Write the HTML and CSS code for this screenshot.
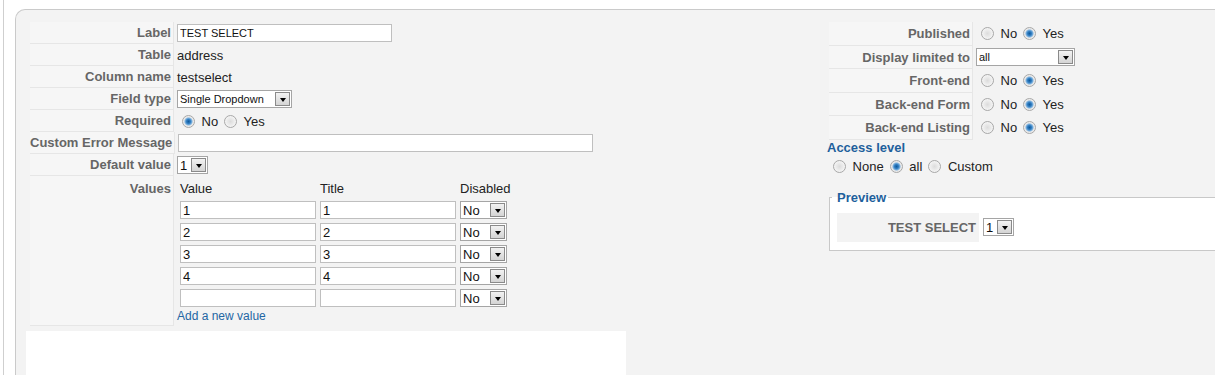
FILE: index.html
```html
<!DOCTYPE html>
<html lang="en">
<head>
  <meta charset="UTF-8">
  <title>Edit field</title>
  <link rel="stylesheet" href="styles.css">
</head>
<body>
  <div class="page">
    <div class="panel">
      <div class="col-main">
        <div class="fields">
          <div class="row">
            <div class="key">Label</div>
            <div class="val"><input type="text" class="txt txt-label" value="TEST SELECT"></div>
          </div>
          <div class="row">
            <div class="key">Table</div>
            <div class="val">address</div>
          </div>
          <div class="row">
            <div class="key">Column name</div>
            <div class="val">testselect</div>
          </div>
          <div class="row">
            <div class="key">Field type</div>
            <div class="val">
              <span class="dd dd-sm dd-type"><select><option>Single Dropdown</option></select><span class="dd-btn"></span></span>
            </div>
          </div>
          <div class="row">
            <div class="key">Required</div>
            <div class="val">
              <label class="opt"><input type="radio" name="required" checked> No</label>
              <label class="opt"><input type="radio" name="required"> Yes</label>
            </div>
          </div>
          <div class="row">
            <div class="key">Custom Error Message</div>
            <div class="val"><input type="text" class="txt txt-error" value=""></div>
          </div>
          <div class="row">
            <div class="key">Default value</div>
            <div class="val">
              <span class="dd dd-num"><select><option>1</option></select><span class="dd-btn"></span></span>
            </div>
          </div>
          <div class="row row-values">
            <div class="key">Values</div>
            <div class="val">
              <div class="values-grid">
                <div class="vh">Value</div>
                <div class="vh">Title</div>
                <div class="vh">Disabled</div>

                <input type="text" class="txt" value="1">
                <input type="text" class="txt" value="1">
                <span class="dd dd-dis"><select><option>No</option></select><span class="dd-btn"></span></span>

                <input type="text" class="txt" value="2">
                <input type="text" class="txt" value="2">
                <span class="dd dd-dis"><select><option>No</option></select><span class="dd-btn"></span></span>

                <input type="text" class="txt" value="3">
                <input type="text" class="txt" value="3">
                <span class="dd dd-dis"><select><option>No</option></select><span class="dd-btn"></span></span>

                <input type="text" class="txt" value="4">
                <input type="text" class="txt" value="4">
                <span class="dd dd-dis"><select><option>No</option></select><span class="dd-btn"></span></span>

                <input type="text" class="txt" value="">
                <input type="text" class="txt" value="">
                <span class="dd dd-dis"><select><option>No</option></select><span class="dd-btn"></span></span>
              </div>
              <a href="#" class="add-link">Add a new value</a>
            </div>
          </div>
        </div>
        <div class="blank"></div>
      </div>

      <div class="col-side">
        <div class="side-fields">
          <div class="row side-row">
            <div class="key">Published</div>
            <div class="val">
              <label class="opt"><input type="radio" name="published"> No</label>
              <label class="opt"><input type="radio" name="published" checked> Yes</label>
            </div>
          </div>
          <div class="row side-row">
            <div class="key">Display limited to</div>
            <div class="val">
              <span class="dd dd-sm dd-limit"><select><option>all</option></select><span class="dd-btn"></span></span>
            </div>
          </div>
          <div class="row side-row">
            <div class="key">Front-end</div>
            <div class="val">
              <label class="opt"><input type="radio" name="frontend"> No</label>
              <label class="opt"><input type="radio" name="frontend" checked> Yes</label>
            </div>
          </div>
          <div class="row side-row">
            <div class="key">Back-end Form</div>
            <div class="val">
              <label class="opt"><input type="radio" name="backform"> No</label>
              <label class="opt"><input type="radio" name="backform" checked> Yes</label>
            </div>
          </div>
          <div class="row side-row">
            <div class="key">Back-end Listing</div>
            <div class="val">
              <label class="opt"><input type="radio" name="backlist"> No</label>
              <label class="opt"><input type="radio" name="backlist" checked> Yes</label>
            </div>
          </div>
        </div>

        <div class="access-title">Access level</div>
        <div class="access-opts">
          <label class="opt"><input type="radio" name="access"> None</label>
          <label class="opt"><input type="radio" name="access" checked> all</label>
          <label class="opt"><input type="radio" name="access"> Custom</label>
        </div>

        <fieldset class="preview">
          <legend>Preview</legend>
          <div class="pv-row">
            <div class="pv-key">TEST SELECT</div>
            <span class="dd dd-num"><select><option>1</option></select><span class="dd-btn"></span></span>
          </div>
        </fieldset>
      </div>
    </div>
  </div>
</body>
</html>
```

FILE: styles.css
```css
body {
  margin: 0;
  background: #fff;
  font-family: 'Liberation Sans', Arial, sans-serif;
  font-size: 13px;
  color: #222;
  overflow: hidden;
}

.page {
  height: 375px;
  box-sizing: border-box;
  margin-left: 3px;
  border-left: 1px solid #cfcfcf;
  padding: 9px 0 0 11px;
}

.panel {
  display: flex;
  height: 366px;
  box-sizing: border-box;
  padding: 12px 0 0 10px;
  overflow: hidden;
  background: #f3f3f3;
  border-top: 1px solid #cacaca;
  border-left: 1px solid #cacaca;
  border-top-left-radius: 10px;
}

.col-main {
  flex: 0 0 801px;
}

.col-side {
  flex: 1;
  min-width: 0;
}

/* key / value rows */
.fields {
  margin-left: 4px;
}

.row {
  display: flex;
}

.key {
  flex: 0 0 144px;
  box-sizing: border-box;
  height: 22px;
  line-height: 21px;
  padding-right: 2px;
  text-align: right;
  font-weight: bold;
  color: #666;
  background: #f6f6f6;
  border-bottom: 1px solid #e6e6e6;
  border-right: 1px solid #e6e6e6;
  white-space: nowrap;
}

.val {
  display: flex;
  align-items: center;
  padding-left: 3px;
  white-space: nowrap;
}

.txt {
  box-sizing: border-box;
  height: 18px;
  margin: 0;
  padding: 0 2px;
  border: 1px solid #bfbfbf;
  background: #fff;
  font-family: 'Liberation Sans', Arial, sans-serif;
  font-size: 13px;
  color: #111;
  outline: none;
}

.txt-label {
  width: 215px;
  font-size: 11px;
}

.txt-error {
  width: 415px;
}

/* radios */
.opt {
  display: inline-flex;
  align-items: center;
  white-space: pre;
}

.opt input {
  appearance: none;
  -webkit-appearance: none;
  width: 13px;
  height: 13px;
  margin: 0 3px 0 5px;
  border: 1px solid #a8a8a8;
  border-radius: 50%;
  box-sizing: border-box;
  background: radial-gradient(circle, #dcdcdc 0, #f4f4f4 70%, #fdfdfd 100%);
}

.opt input:checked {
  background: radial-gradient(circle, #0f5a9c 0, #2f7cc0 2px, #7fb3df 3.5px, #e8e8e8 4.5px, #f6f6f6 100%);
}

.opt + .opt {
  margin-left: 1px;
}

/* dropdowns */
.dd {
  display: inline-flex;
  align-items: center;
  box-sizing: border-box;
  height: 18px;
  border: 1px solid #a5a5a5;
  background: #fff;
}

.dd select {
  appearance: none;
  -webkit-appearance: none;
  flex: 1;
  min-width: 0;
  height: 16px;
  margin: 0;
  padding: 0 0 0 2px;
  border: 0;
  background: transparent;
  font-family: 'Liberation Sans', Arial, sans-serif;
  font-size: 13px;
  color: #111;
  outline: none;
}

.dd-sm select {
  font-size: 11px;
}

.dd-btn {
  flex: none;
  display: flex;
  align-items: center;
  justify-content: center;
  box-sizing: border-box;
  width: 15px;
  height: 14px;
  margin-right: 1px;
  border: 1px solid #8a8a8a;
  background: linear-gradient(#f2f2f2, #d4d4d4);
}

.dd-btn::before {
  content: '';
  margin-top: 2px;
  border-left: 3.5px solid transparent;
  border-right: 3.5px solid transparent;
  border-top: 4px solid #000;
}

.dd-type {
  width: 115px;
}

.dd-num {
  width: 31px;
}

.dd-dis {
  width: 47px;
}

.dd-limit {
  width: 99px;
}

/* values sub-table */
.row-values .key {
  height: 150px;
  line-height: 21px;
  padding-top: 2px;
}

.row-values .val {
  flex-direction: column;
  align-items: flex-start;
}

.values-grid {
  display: grid;
  grid-template-columns: 136px 136px 47px;
  column-gap: 4px;
  row-gap: 4px;
  margin: 3px 0 0 3px;
}

.vh {
  height: 19px;
  line-height: 19px;
  margin-bottom: -1px;
}

.values-grid .txt {
  width: 136px;
}

.add-link {
  margin-top: 2px;
  line-height: 14px;
  font-size: 12px;
  color: #2366a3;
  text-decoration: none;
}

.blank {
  width: 600px;
  height: 44px;
  margin-top: 5px;
  background: #fff;
}

/* side column */
.side-fields {
  margin-left: 2px;
}

.side-row .key {
  height: 23.5px;
  line-height: 23px;
}

.access-title {
  line-height: 16px;
  font-weight: bold;
  color: #1e5f9c;
}

.access-opts {
  display: flex;
  align-items: center;
  height: 18px;
  margin-top: 2px;
}

.access-opts .opt:first-child input {
  margin-left: 6px;
}

.preview {
  margin: 14px -3px 0 2px;
  padding: 8px 7px 8px 7px;
  border: 1px solid #c8c8c8;
  background: #fff;
}

.preview legend {
  margin-left: -5px;
  padding: 0 2px 0 5px;
  line-height: 15px;
  font-weight: bold;
  color: #1e5f9c;
}

.pv-row {
  display: flex;
  align-items: center;
}

.pv-key {
  box-sizing: border-box;
  width: 142px;
  height: 29px;
  line-height: 29px;
  margin-right: 4px;
  padding-right: 3px;
  text-align: right;
  font-weight: bold;
  color: #666;
  background: #f3f3f3;
}
```
